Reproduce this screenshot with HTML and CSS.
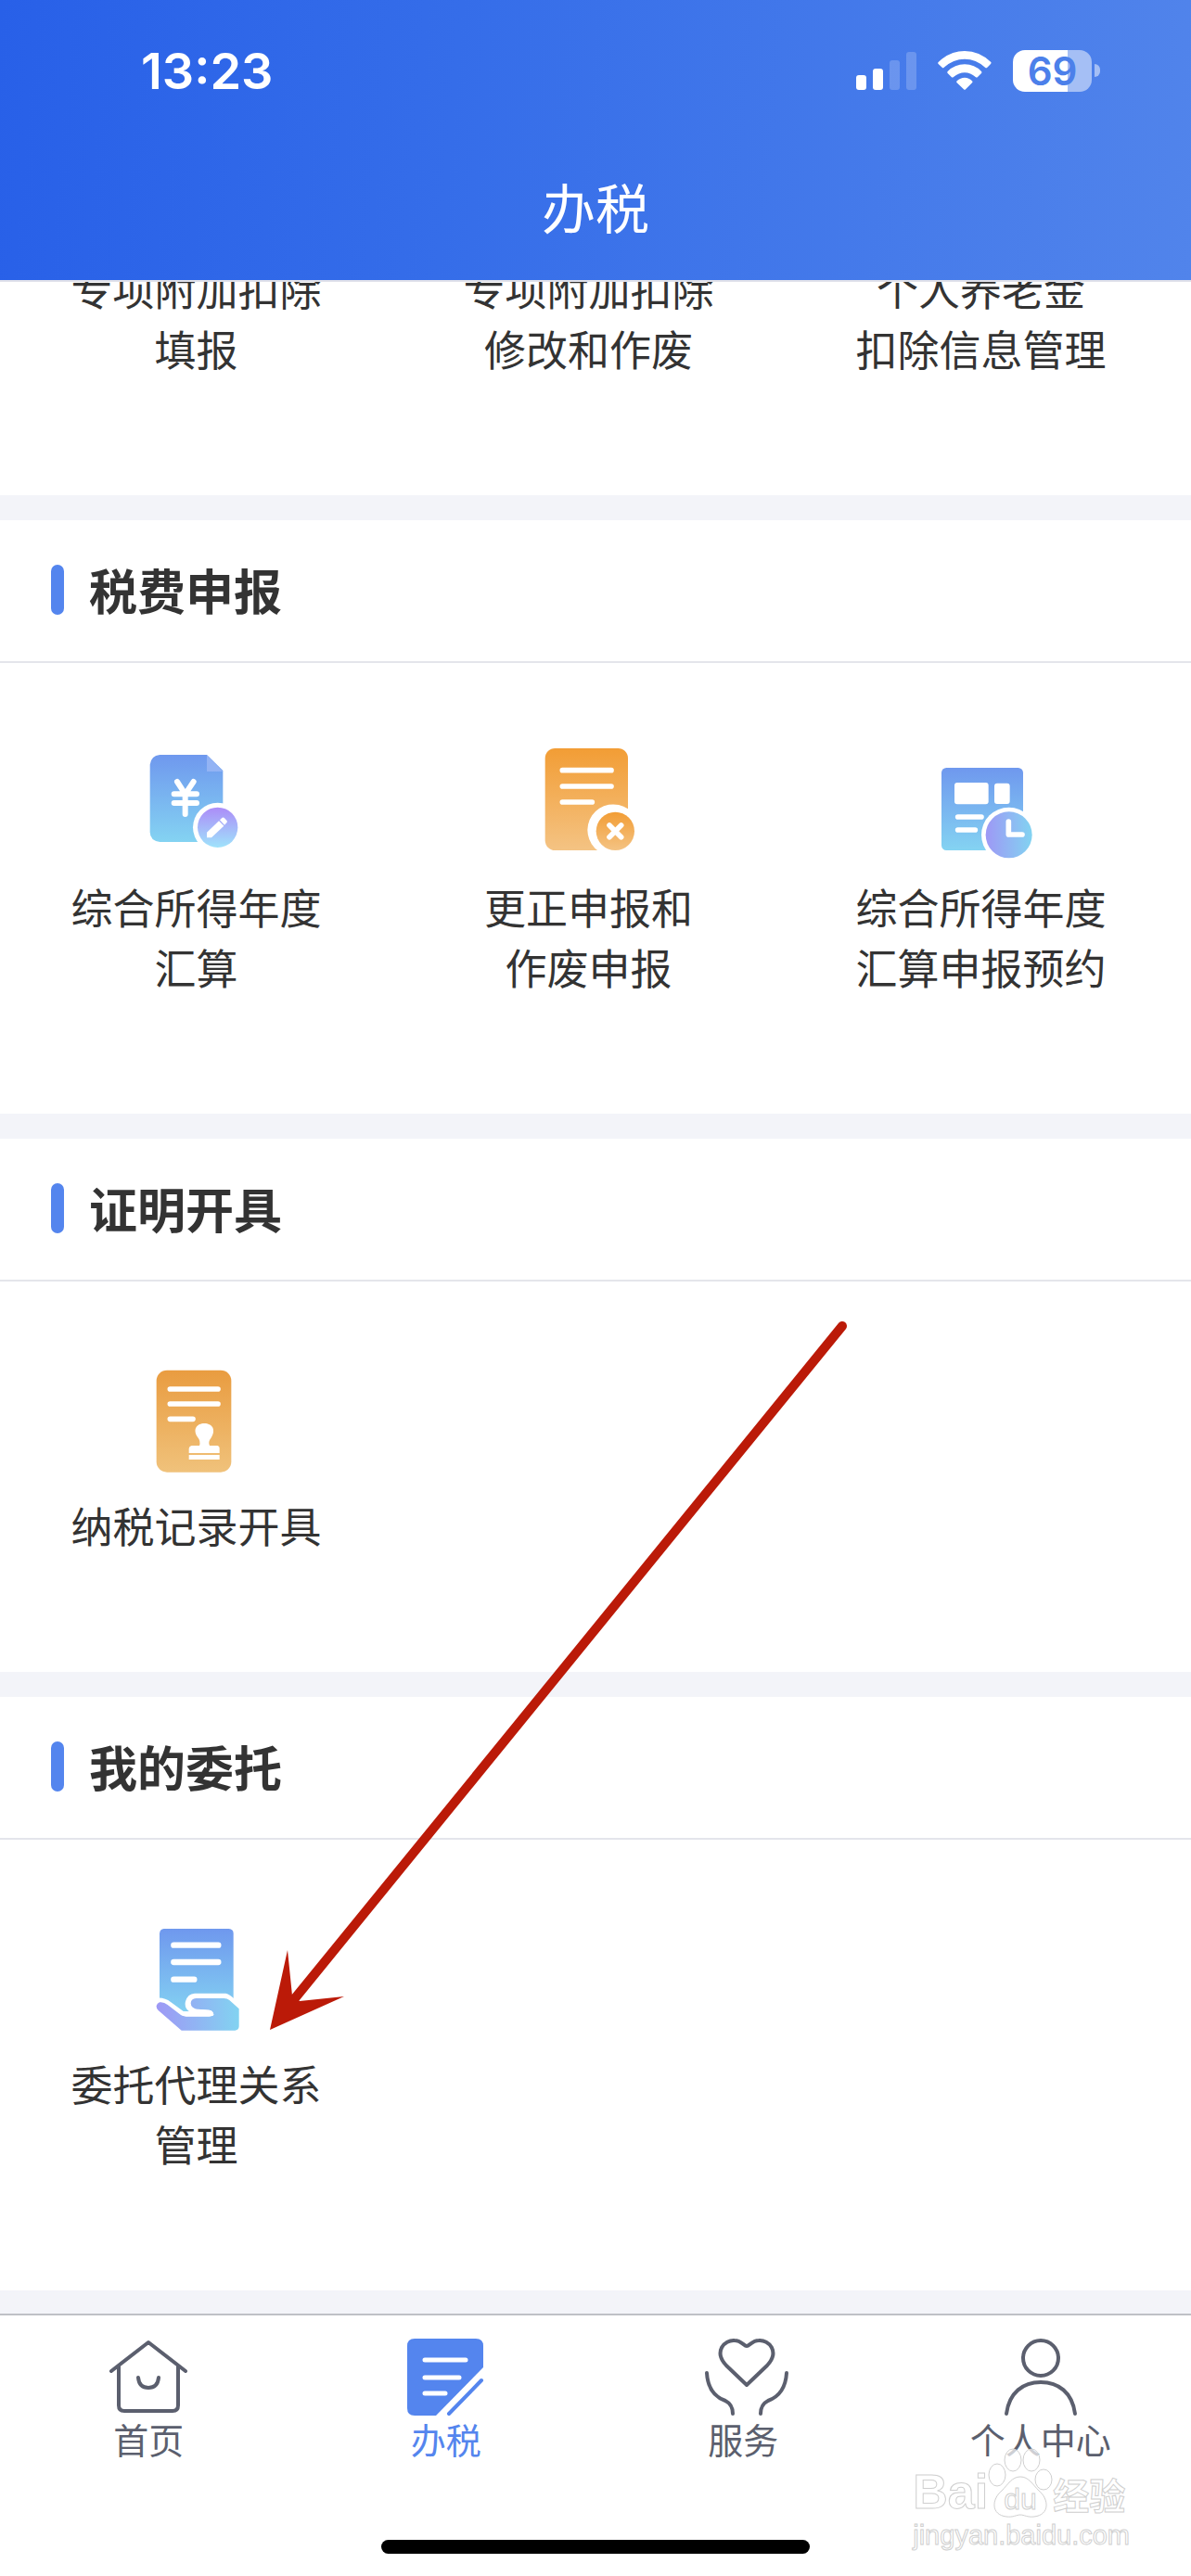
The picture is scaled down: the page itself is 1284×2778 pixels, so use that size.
FILE: index.html
```html
<!DOCTYPE html>
<html lang="zh-CN">
<head>
    <meta charset="UTF-8" />
    <meta name="viewport" content="width=device-width, initial-scale=1.0" />
    <title>办税</title>
    <link rel="stylesheet" href="styles.css">
</head>
<body>
    <div class="page">
        <header class="header">
            <div class="status-bar">
                <span class="time">13:23</span>
                <div class="status-icons">
                    <svg class="signal" viewBox="0 0 65 42" aria-hidden="true">
                        <rect x="0" y="26" width="11" height="16" rx="3" />
                        <rect x="18" y="19" width="11" height="23" rx="3" />
                        <rect x="36" y="10" width="11" height="32" rx="3" opacity="0.2" />
                        <rect x="54" y="1" width="11" height="41" rx="3" opacity="0.2" />
                    </svg>
                    <svg class="wifi" viewBox="338 72 174 126" aria-hidden="true">
                        <path d="M340 108Q377 72 425 72T510 108Q512 111 509 114L498 125Q495 128 491 125Q462 98 425 98T358 125Q355 128 352 125L340 114Q337 111 340 108Z" />
                        <path d="M370 138Q393 115 425 115T479 138Q482 141 479 144L467 156Q464 159 460 156Q444 142 425 142T389 156Q385 159 382 156L370 144Q367 141 370 138Z" />
                        <path d="M400 169Q411 158 425 158T449 169Q452 172 449 175L428 196Q425 199 422 196L400 175Q397 172 400 169Z" />
                    </svg>
                    <div class="battery"><span class="battery-level">69</span></div>
                </div>
            </div>
            <h1>办税</h1>
        </header>

        <main class="content">
            <section class="card card-scrolled">
                <div class="grid">
                    <a href="#" class="item">专项附加扣除<br>填报</a>
                    <a href="#" class="item">专项附加扣除<br>修改和作废</a>
                    <a href="#" class="item">个人养老金<br>扣除信息管理</a>
                </div>
            </section>

            <section class="card">
                <h2>税费申报</h2>
                <div class="grid">
                    <a href="#" class="item">
                        <svg class="icon" viewBox="4 0 420 420" aria-hidden="true">
                            <defs>
                                <linearGradient id="blue" x1="0" y1="0" x2="0" y2="1">
                                    <stop offset="0" stop-color="#6f98ee" />
                                    <stop offset="1" stop-color="#84d3f2" />
                                </linearGradient>
                                <linearGradient id="orange" x1="0" y1="0" x2="0" y2="1">
                                    <stop offset="0" stop-color="#f29d35" />
                                    <stop offset="1" stop-color="#f4c383" />
                                </linearGradient>
                                <linearGradient id="brown" x1="0" y1="0" x2="0" y2="1">
                                    <stop offset="0" stop-color="#e99c40" />
                                    <stop offset="1" stop-color="#f0c27b" />
                                </linearGradient>
                                <linearGradient id="purple" x1="0" y1="0" x2="0" y2="1">
                                    <stop offset="0" stop-color="#ac8cf8" />
                                    <stop offset="1" stop-color="#9fe3fb" />
                                </linearGradient>
                                <linearGradient id="side" x1="0" y1="0" x2="1" y2="0">
                                    <stop offset="0" stop-color="#9e98f5" />
                                    <stop offset="1" stop-color="#82d3f1" />
                                </linearGradient>
                            </defs>
                            <path fill="url(#blue)" d="M95 72H247L299 123V354H95Q63 350 63 322V104Q66 75 95 72Z" />
                            <path fill="#93b3f4" d="M247 73L299 126H247Z" />
                            <path fill="none" stroke="#fff" stroke-width="18" stroke-linecap="round" stroke-linejoin="round" d="M151 159L177 199L204 159M141 199H214M141 228H214M177 199V264" />
                            <circle cx="282" cy="307" r="80" fill="#fff" />
                            <circle cx="282" cy="307" r="65" fill="url(#purple)" />
                            <path fill="#fff" d="M247 323L286 286L302 302L262 340H247ZM289 283L296 276Q300 273 304 277L311 284Q315 288 311 292L304 299Z" />
                        </svg>
                        综合所得年度<br>汇算
                    </a>
                    <a href="#" class="item">
                        <svg class="icon" viewBox="-15 0 420 420" aria-hidden="true">
                            <rect x="53" y="51" width="268" height="330" rx="32" fill="url(#orange)" />
                            <path fill="none" stroke="#fff" stroke-width="17" stroke-linecap="round" d="M109 122H267M109 174H267M109 225H205" />
                            <path fill="#fff" d="M321 247A83 83 0 0 0 226 384H330Z" />
                            <circle cx="280" cy="319" r="62" fill="url(#orange)" />
                            <path stroke="#fff" stroke-width="17" stroke-linecap="round" d="M261 300L299 338M299 300L261 338" />
                        </svg>
                        更正申报和<br>作废申报
                    </a>
                    <a href="#" class="item">
                        <svg class="icon" viewBox="-6 -30 420 420" aria-hidden="true">
                            <rect x="75" y="84" width="264" height="267" rx="16" fill="url(#blue)" />
                            <rect x="117" y="132" width="110" height="70" rx="9" fill="#fff" />
                            <rect x="246" y="134" width="50" height="67" rx="9" fill="#fff" />
                            <path stroke="#fff" stroke-width="17" stroke-linecap="round" d="M128 243H204M128 285H184" />
                            <circle cx="293" cy="301" r="89" fill="#fff" />
                            <circle cx="293" cy="301" r="75" fill="url(#side)" />
                            <path fill="none" stroke="#fff" stroke-width="17" stroke-linecap="round" stroke-linejoin="round" d="M292 258V300H336" />
                        </svg>
                        综合所得年度<br>汇算申报预约
                    </a>
                </div>
            </section>

            <section class="card">
                <h2>证明开具</h2>
                <div class="grid">
                    <a href="#" class="item">
                        <svg class="icon" viewBox="4 -9 420 420" aria-hidden="true">
                            <rect x="84" y="53" width="242" height="330" rx="34" fill="url(#brown)" />
                            <path stroke="#fff" stroke-width="17" stroke-linecap="round" d="M128 114H283M128 162H283M128 211H202" />
                            <path fill="#fff" d="M223 297Q228 282 217 269C200 244 215 225 239 225S279 244 260 273Q250 285 256 297H280Q288 298 288 306V321H189V306Q190 298 198 297ZM189 327H288V342H189Z" />
                        </svg>
                        纳税记录开具
                    </a>
                </div>
            </section>

            <section class="card">
                <h2>我的委托</h2>
                <div class="grid">
                    <a href="#" class="item">
                        <svg class="icon" viewBox="4 -3 420 420" aria-hidden="true">
                            <path fill="url(#blue)" d="M108 60H318Q333 61 333 76V340H94V76Q95 61 108 60Z" />
                            <path stroke="#fff" stroke-width="19" stroke-linecap="round" d="M140 113H284M140 168H284M140 224H206" />
                            <path fill="#fff" d="M80 284Q110 280 130 297L172 328H190Q173 315 178 295Q185 270 208 269H308Q318 270 333 284L356 306V394H80Z" />
                            <path fill="url(#side)" d="M94 298Q108 296 120 306L163 339Q170 343 180 343H245Q270 343 269 338Q268 324 255 323L220 321Q195 318 195 301Q196 286 212 285H302Q313 285 320 291L351 319V376Q350 388 338 389H165L90 324Q83 318 84 309Q86 301 94 298Z" />
                            <path fill="#fff" d="M170 328H210L218 320L255 323Q266 324 269 338Q266 344 245 344H180Q170 343 163 338Z" />
                        </svg>
                        委托代理关系<br>管理
                    </a>
                </div>
            </section>
        </main>

        <nav class="tab-bar">
            <div class="tabs">
                <a href="#" class="tab">
                    <svg class="tab-icon" viewBox="-5 0 100 90" aria-hidden="true">
                        <path d="M5 39L45 8L85 39M13 33V76Q13 82 19 82H71Q77 82 77 76V33M34 46Q35 57 45 57T56 46" />
                    </svg>
                    首页
                </a>
                <a href="#" class="tab active">
                    <svg class="tab-icon" viewBox="-5 0 100 90" aria-hidden="true">
                        <path class="solid" d="M11 4H77Q85 4 85 12V35L34 87H11Q3 87 3 79V12Q3 4 11 4Z" />
                        <path class="lines" d="M22 27H66M22 46H59M22 63H44" />
                        <path d="M83 49L48 85" />
                    </svg>
                    办税
                </a>
                <a href="#" class="tab">
                    <svg class="tab-icon" viewBox="-5 0 100 90" aria-hidden="true">
                        <path d="M49 54L27 33C13 18 25 5 36 6C43 6 46 12 49 12S55 6 62 6C73 5 85 18 71 33ZM6 41C7 58 15 67 26 71Q34 75 34 85M92 41C91 58 83 67 72 71Q64 75 64 85" />
                    </svg>
                    服务
                </a>
                <a href="#" class="tab">
                    <svg class="tab-icon" viewBox="-5 0 100 90" aria-hidden="true">
                        <circle cx="45" cy="25" r="19" />
                        <path d="M8 85C11 62 26 51 45 51S79 62 82 85" />
                    </svg>
                    个人中心
                </a>
            </div>
            <div class="home-indicator"></div>
        </nav>

        <svg class="arrow" viewBox="280 1420 640 780" aria-hidden="true">
            <path d="M908 1430L318 2155" stroke="#bb1a08" stroke-width="10" stroke-linecap="round" />
            <path d="M291 2189L310 2103L315 2152L323 2158L371 2153Z" fill="#bb1a08" />
        </svg>

        <div class="watermark">
            <div class="watermark-brand">
                <span class="latin">Bai</span>
                <svg class="paw" viewBox="0 0 70 76" aria-hidden="true">
                    <ellipse cx="10" cy="29" rx="9" ry="12" />
                    <ellipse cx="27" cy="13" rx="9" ry="12" />
                    <ellipse cx="47" cy="13" rx="9" ry="12" />
                    <ellipse cx="60" cy="34" rx="9" ry="11" />
                    <path d="M35 31C44 31 48 39 55 46C66 55 67 72 50 74C43 75 39 72 35 72S27 75 20 74C3 72 4 55 15 46C22 39 26 31 35 31Z" />
                    <text x="35" y="66" text-anchor="middle">du</text>
                </svg>
                <span class="han">经验</span>
            </div>
            <div class="watermark-url">jingyan.baidu.com</div>
        </div>
    </div>
</body>
</html>
```
FILE: styles.css
```css
* {
    box-sizing: border-box;
}

body {
    margin: 0;
    font-family: "Noto Sans CJK SC", "Noto Sans", sans-serif;
    color: #333;
    background: #f3f4f9;
}

a {
    color: inherit;
    text-decoration: none;
}

.page {
    position: relative;
    display: flex;
    flex-direction: column;
    min-height: 100vh;
}

/* header */
.header {
    color: #fff;
    background: linear-gradient(95deg, #2860e8 0%, #356de9 38%, #5184eb 100%);
    border-bottom: 2px solid #e0e1ea;
}

.status-bar {
    display: flex;
    justify-content: space-between;
    align-items: center;
    height: 152px;
    padding: 0 98px 0 152px;
}

.time {
    font-family: Inter, sans-serif;
    font-size: 54px;
    font-weight: 600;
}

.status-icons {
    display: flex;
    align-items: center;
    gap: 23px;
}

.signal {
    width: 65px;
    height: 42px;
    fill: #fff;
}

.wifi {
    width: 58px;
    height: 42px;
    fill: #fff;
}

.battery {
    display: flex;
    align-items: center;
    gap: 3px;
}

.battery::after {
    content: '';
    width: 6px;
    height: 14px;
    border-radius: 0 6px 6px 0;
    background: #a5bff5;
}

.battery-level {
    width: 85px;
    height: 45px;
    border-radius: 13px;
    background: linear-gradient(90deg, #fff 69%, #a5bff5 69%);
    color: #4c80ea;
    font-family: Inter, sans-serif;
    font-size: 42px;
    font-weight: 600;
    line-height: 45px;
    text-align: center;
}

h1 {
    margin: 0;
    height: 150px;
    font-size: 58px;
    font-weight: 400;
    line-height: 140px;
    text-align: center;
}

/* content */
.content {
    flex: 1;
    display: flex;
    flex-direction: column;
    gap: 27px;
    padding-bottom: 25px;
    overflow: hidden;
}

.card {
    background: #fff;
}

.card h2 {
    display: flex;
    align-items: center;
    gap: 27px;
    height: 154px;
    margin: 0;
    padding: 0 55px 3px;
    border-bottom: 2px solid #e4e5eb;
    font-size: 52px;
    font-weight: 700;
}

.card h2::before {
    content: '';
    width: 14px;
    height: 54px;
    border-radius: 7px;
    background: #5485ee;
}

.grid {
    display: grid;
    grid-template-columns: repeat(3, 1fr);
    padding: 75px 15px 126px 0;
}

/* first card is scrolled up under the header */
.card-scrolled {
    margin-top: -26px;
}

.card-scrolled .grid {
    padding-top: 0;
}

.item {
    font-size: 45px;
    line-height: 65px;
    text-align: center;
}

.icon {
    display: block;
    width: 140px;
    height: 140px;
    margin: 0 auto 15px;
}

/* bottom tabs */
.tab-bar {
    padding: 21px 0 24px;
    border-top: 2px solid #bfc1c6;
    background: #fff;
}

.tabs {
    display: grid;
    grid-template-columns: repeat(4, 1fr);
    padding-right: 2px;
}

.tab {
    color: #5b5f6e;
    font-size: 38px;
    line-height: 44px;
    text-align: center;
}

.tab.active {
    color: #5485ee;
}

.tab-icon {
    display: block;
    width: 100px;
    height: 90px;
    margin: 0 auto;
    fill: none;
    stroke: currentColor;
    stroke-width: 4;
    stroke-linecap: round;
    stroke-linejoin: round;
}

.tab-icon .solid {
    fill: currentColor;
    stroke: none;
}

.tab-icon .lines {
    stroke: #fff;
    stroke-width: 5;
}

.home-indicator {
    width: 36%;
    height: 15px;
    margin: 87px auto 0;
    border-radius: 8px;
    background: #000;
}

/* overlays */
.arrow {
    position: absolute;
    top: 1420px;
    left: 280px;
    width: 640px;
    height: 780px;
    pointer-events: none;
}

.watermark {
    position: absolute;
    right: 66px;
    bottom: 26px;
    color: #fff;
    -webkit-text-stroke: 1px #cfcfcf;
    pointer-events: none;
}

.watermark-brand {
    display: flex;
    align-items: flex-end;
    height: 76px;
}

.watermark .latin {
    font-family: "Liberation Sans", sans-serif;
    font-size: 52px;
    font-weight: 700;
    line-height: 58px;
}

.watermark .han {
    font-size: 39px;
    font-weight: 700;
    line-height: 54px;
}

.paw {
    width: 70px;
    height: 76px;
    fill: rgba(255, 255, 255, 0.7);
    stroke: #cfcfcf;
}

.paw text {
    font-family: "Liberation Sans", sans-serif;
    font-size: 32px;
}

.watermark-url {
    font-family: "Liberation Sans", sans-serif;
    font-size: 29px;
    line-height: 36px;
}
```
